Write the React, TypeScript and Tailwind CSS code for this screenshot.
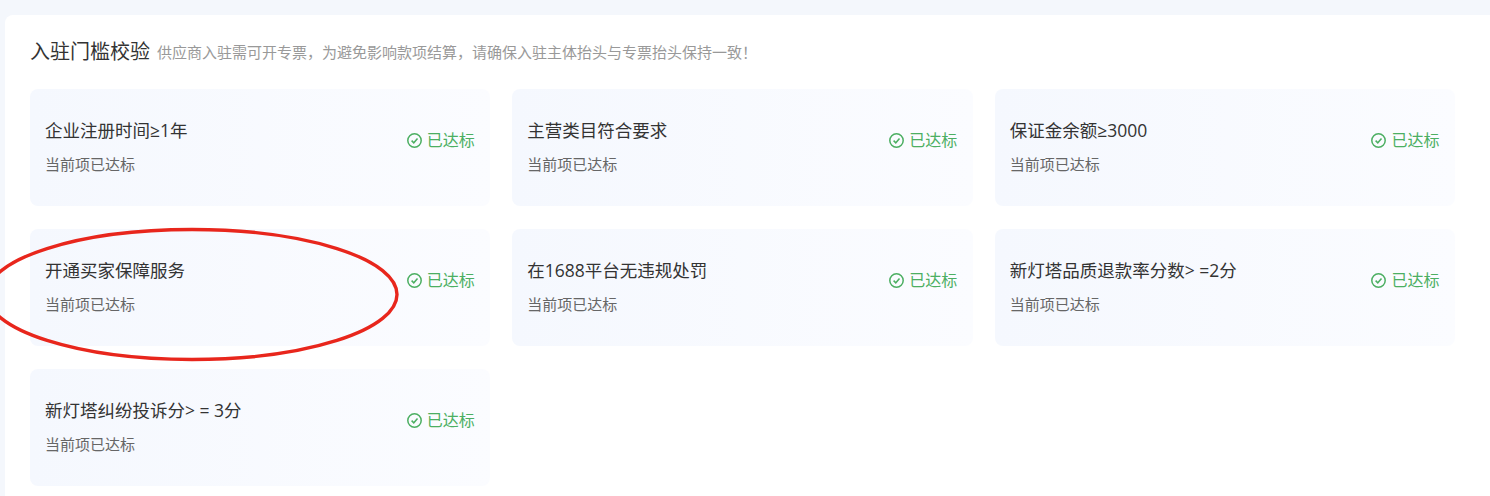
const items = [
  "企业注册时间≥1年",
  "主营类目符合要求",
  "保证金余额≥3000",
  "开通买家保障服务",
  "在1688平台无违规处罚",
  "新灯塔品质退款率分数> =2分",
  "新灯塔纠纷投诉分> = 3分",
];

function CheckIcon() {
  return (
    <svg width="15" height="15" viewBox="0 0 15 15" fill="none" stroke="#4caf62" className="shrink-0">
      <circle cx="7.5" cy="7.5" r="6.7" strokeWidth="1.5" />
      <path d="M4.6 7.6 L6.8 9.8 L10.5 5.5" strokeWidth="1.5" />
    </svg>
  );
}

function RuleCard({ title }: { title: string }) {
  return (
    <div className="flex h-[117px] items-start justify-between rounded-lg bg-gradient-to-r from-[#f5f8fe] to-[#fbfcff] pl-[15px] pr-[15.5px]">
      <div className="pt-[28px]">
        <div className="text-[17.5px] leading-[26px] whitespace-pre text-[#333333]">{title}</div>
        <div className="mt-[11px] text-[15px] leading-[20px] text-[#666666]">当前项已达标</div>
      </div>
      <div className="flex items-center gap-[5px] pt-[40px] text-[16px] leading-[22px] text-[#4caf62]">
        <CheckIcon />
        <span>已达标</span>
      </div>
    </div>
  );
}

export default function App() {
  return (
    <div className="relative h-[496px] w-[1490px] overflow-hidden bg-[#f4f7fc] pt-[15px] pl-[5px] [font-family:'Open_Sans','Noto_Sans_CJK_SC',sans-serif]">
      <div className="h-[481px] rounded-tl-lg bg-white pt-[23px] pl-[25px] pr-[35px]">
        <div className="flex h-[28px] items-center gap-[7px]">
          <span className="text-[20px] text-[#333333]">入驻门槛校验</span>
          <span className="pt-[1px] text-[15px] text-[#999999]">
            供应商入驻需可开专票，为避免影响款项结算，请确保入驻主体抬头与专票抬头保持一致！
          </span>
        </div>
        <div className="mt-[23px] grid grid-cols-3 gap-x-[22px] gap-y-[23px]">
          {items.map((item) => (
            <RuleCard key={item} title={item} />
          ))}
        </div>
      </div>
      <svg width="420" height="140" viewBox="0 0 420 140" fill="none" className="absolute left-0 top-[225px]">
        <ellipse cx="192" cy="69.5" rx="205" ry="65" stroke="#e8261c" strokeWidth="3.4" />
      </svg>
    </div>
  );
}
